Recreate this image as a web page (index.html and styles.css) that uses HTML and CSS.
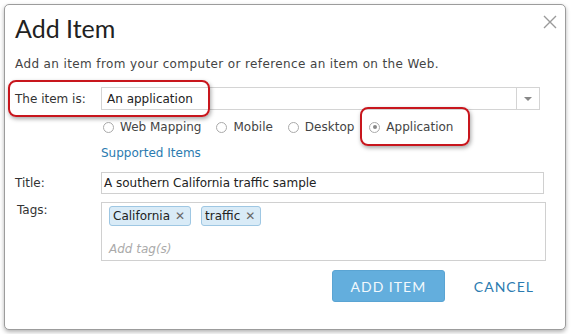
FILE: index.html
```html
<!DOCTYPE html>
<html lang="en">
<head>
    <meta charset="UTF-8">
    <title>Add Item</title>
    <link rel="stylesheet" href="styles.css">
</head>
<body>

    <!-- Dialog -->
    <div class="dialog">
        <div class="dialog-header">
            <h1>Add Item</h1>
            <svg class="close" width="14" height="14" viewBox="0 0 14 14">
                <path d="M1 1 L13 13 M13 1 L1 13" stroke="#9a9a9a" stroke-width="1.4" fill="none"/>
            </svg>
        </div>
        <p class="intro">Add an item from your computer or reference an item on the Web.</p>

        <div class="form-row">
            <label>The item is:</label>
            <div class="select">
                <span>An application</span>
                <span class="select-arrow"><span class="caret"></span></span>
            </div>
        </div>

        <div class="radio-row">
            <span class="radio-opt"><span class="radio"></span>Web Mapping</span>
            <span class="radio-opt"><span class="radio"></span>Mobile</span>
            <span class="radio-opt"><span class="radio"></span>Desktop</span>
            <span class="radio-opt"><span class="radio checked"></span>Application</span>
        </div>

        <a class="supported" href="#">Supported Items</a>

        <div class="form-row title-row">
            <label>Title:</label>
            <div class="text-input">A southern California traffic sample</div>
        </div>

        <div class="form-row tags-row">
            <label class="tags-label">Tags:</label>
            <div class="tags-box">
                <div class="chips">
                    <span class="chip">California <span class="chip-x">&#x2715;</span></span>
                    <span class="chip">traffic <span class="chip-x">&#x2715;</span></span>
                </div>
                <div class="tag-placeholder">Add tag(s)</div>
            </div>
        </div>

        <div class="actions">
            <button class="btn-primary">ADD ITEM</button>
            <a class="btn-link" href="#">CANCEL</a>
        </div>

        <!-- highlight callouts -->
        <div class="callout callout1"></div>
        <div class="callout callout2"></div>
    </div>

</body>
</html>
```

FILE: styles.css
```css
body {
    margin: 0;
    background: #fff;
    font-family: "DejaVu Sans", Verdana, sans-serif;
    font-size: 12px;
    color: #333;
}

.dialog {
    position: relative;
    margin: 4px;
    width: 562px;
    height: 326px;
    box-sizing: border-box;
    border: 1px solid #9c9c9c;
    border-radius: 5px;
    box-shadow: 0 2px 4px rgba(0, 0, 0, 0.3);
    padding: 8px 0 0 10px;
    background: #fff;
}

.dialog-header {
    display: flex;
    justify-content: space-between;
    align-items: flex-start;
    padding-right: 8px;
}

h1 {
    margin: 0;
    font-family: Lato, sans-serif;
    font-weight: normal;
    font-size: 25px;
    line-height: 30px;
    color: #222;
}

.close {
    margin-top: 2px;
}

.intro {
    margin: 13px 0 0;
    line-height: 16px;
    letter-spacing: 0.38px;
    color: #444;
}

.form-row {
    display: grid;
    grid-template-columns: 86px auto;
    align-items: center;
    margin-top: 15px;
}

.form-row label {
    color: #333;
}

.select {
    width: 439px;
    height: 23px;
    box-sizing: border-box;
    border: 1px solid #d4d4d4;
    display: flex;
    align-items: center;
    justify-content: space-between;
    padding-left: 5px;
    color: #222;
}

.select-arrow {
    width: 22px;
    height: 100%;
    border-left: 1px solid #d4d4d4;
    display: flex;
    align-items: center;
    justify-content: center;
}

.caret {
    width: 0;
    height: 0;
    border-left: 4px solid transparent;
    border-right: 4px solid transparent;
    border-top: 4px solid #888;
}

.radio-row {
    display: flex;
    gap: 15px;
    margin: 9px 0 0 88px;
    line-height: 16px;
    color: #444;
}

.radio-opt {
    display: flex;
    align-items: center;
}

.radio {
    width: 9px;
    height: 9px;
    border: 1px solid #aaa;
    border-radius: 50%;
    margin-right: 6px;
    display: flex;
    align-items: center;
    justify-content: center;
    background: #fff;
}

.radio.checked::after {
    content: "";
    width: 4px;
    height: 4px;
    border-radius: 50%;
    background: #888;
}

.supported {
    display: block;
    margin: 10px 0 0 86px;
    line-height: 16px;
    color: #2b7bb0;
    text-decoration: none;
}

.title-row {
    margin-top: 11px;
}

.text-input {
    width: 443px;
    height: 22px;
    box-sizing: border-box;
    border: 1px solid #d0d0d0;
    padding-left: 2px;
    line-height: 20px;
    color: #222;
}

.tags-row {
    margin-top: 8px;
    align-items: start;
}

.tags-label {
    padding: 1px 0 0 2px;
}

.tags-box {
    width: 445px;
    height: 59px;
    box-sizing: border-box;
    border: 1px solid #d0d0d0;
    padding: 3px 0 0 7px;
}

.chips {
    display: flex;
    gap: 10px;
}

.chip {
    display: inline-flex;
    align-items: center;
    height: 20px;
    box-sizing: border-box;
    padding: 0 5px 0 3px;
    background: #d9ebf7;
    border: 1px solid #9ec7e3;
    border-radius: 3px;
    color: #222;
}

.chip-x {
    margin-left: 5px;
    font-size: 12px;
    color: #666;
}

.tag-placeholder {
    margin-top: 15px;
    font-style: italic;
    color: #aaa;
    line-height: 16px;
}

.actions {
    display: flex;
    justify-content: flex-end;
    align-items: center;
    margin-top: 9px;
    padding-right: 31px;
}

.btn-primary {
    width: 113px;
    height: 32px;
    background: #63aedd;
    border: 1px solid #5aa4d3;
    border-radius: 3px;
    color: #f2f8fc;
    font-family: Lato, sans-serif;
    font-size: 14px;
    letter-spacing: 1px;
    cursor: pointer;
}

.btn-link {
    margin-left: 29px;
    color: #2b7bb0;
    font-family: Lato, sans-serif;
    font-size: 14px;
    letter-spacing: 1px;
    text-decoration: none;
}

/* red highlight callouts */
.callout {
    position: absolute;
    border: 2px solid #c8161d;
    border-radius: 8px;
    box-shadow: 1px 2px 4px rgba(0, 0, 0, 0.35);
}

.callout1 {
    left: 3px;
    top: 75px;
    width: 198px;
    height: 33px;
}

.callout2 {
    left: 355px;
    top: 102px;
    width: 106px;
    height: 35px;
}
```
